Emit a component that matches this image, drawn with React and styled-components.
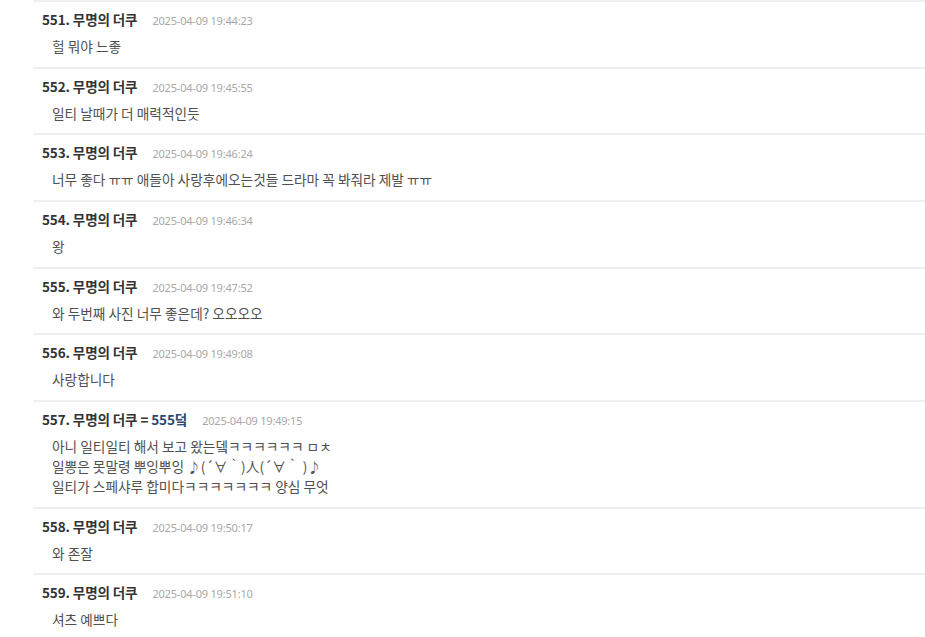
import React from "react";
import styled, { createGlobalStyle } from "styled-components";

const Global = createGlobalStyle`
  html, body { margin: 0; padding: 0; background: #fff; }
  body { font-family: "Noto Sans CJK KR", "Noto Sans", sans-serif; }
`;

const Page = styled.div`
  padding-left: 33px;
`;

const List = styled.ul`
  list-style: none;
  margin: 0;
  padding: 0;
  border-top: 2px solid #f0f0f0;
`;

const Row = styled.li`
  border-bottom: 2px solid #f0f0f0;
  padding: 8px 0 10.67px 9px;
`;

const Header = styled.div`
  display: flex;
  align-items: baseline;
  gap: 15px;
  height: 19px;
  line-height: 19px;
  margin-bottom: 7px;
`;

const Author = styled.span`
  font-family: "Noto Sans CJK KR", sans-serif;
  font-weight: 700;
  font-size: 13.5px;
  color: #333;
  letter-spacing: -0.1px;
  white-space: pre;
`;

const Tag = styled.span`
  color: #2d4a6e;
`;

const Time = styled.span`
  font-family: "Noto Sans", "Open Sans", sans-serif;
  font-size: 11px;
  color: #a8a8a8;
  letter-spacing: -0.2px;
`;

const Body = styled.div`
  padding-left: 10px;
  font-size: 13.7px;
  line-height: 20px;
  color: #505050;
  white-space: pre-line;
`;

const comments = [
  { n: 551, time: "2025-04-09 19:44:23", text: "헐 뭐야 느좋" },
  { n: 552, time: "2025-04-09 19:45:55", text: "일티 날때가 더 매력적인듯" },
  { n: 553, time: "2025-04-09 19:46:24", text: "너무 좋다 ㅠㅠ 애들아 사랑후에오는것들 드라마 꼭 봐줘라 제발 ㅠㅠ" },
  { n: 554, time: "2025-04-09 19:46:34", text: "왕" },
  { n: 555, time: "2025-04-09 19:47:52", text: "와 두번째 사진 너무 좋은데? 오오오오" },
  { n: 556, time: "2025-04-09 19:49:08", text: "사랑합니다" },
  {
    n: 557,
    tag: "555덬",
    time: "2025-04-09 19:49:15",
    text: "아니 일티일티 해서 보고 왔는뎈ㅋㅋㅋㅋㅋㅋ ㅁㅊ\n일뽕은 못말령 뿌잉뿌잉 ♪(´∀｀)人(´∀｀ )♪\n일티가 스페샤루 합미다ㅋㅋㅋㅋㅋㅋㅋ 양심 무엇",
  },
  { n: 558, time: "2025-04-09 19:50:17", text: "와 존잘" },
  { n: 559, time: "2025-04-09 19:51:10", text: "셔츠 예쁘다" },
];

export default function App() {
  return (
    <Page>
      <Global />
      <List>
        {comments.map((c) => (
          <Row key={c.n}>
            <Header>
              <Author>
                {c.n}. 무명의 더쿠{c.tag && <>{" = "}<Tag>{c.tag}</Tag></>}
              </Author>
              <Time>{c.time}</Time>
            </Header>
            <Body>{c.text}</Body>
          </Row>
        ))}
      </List>
    </Page>
  );
}
